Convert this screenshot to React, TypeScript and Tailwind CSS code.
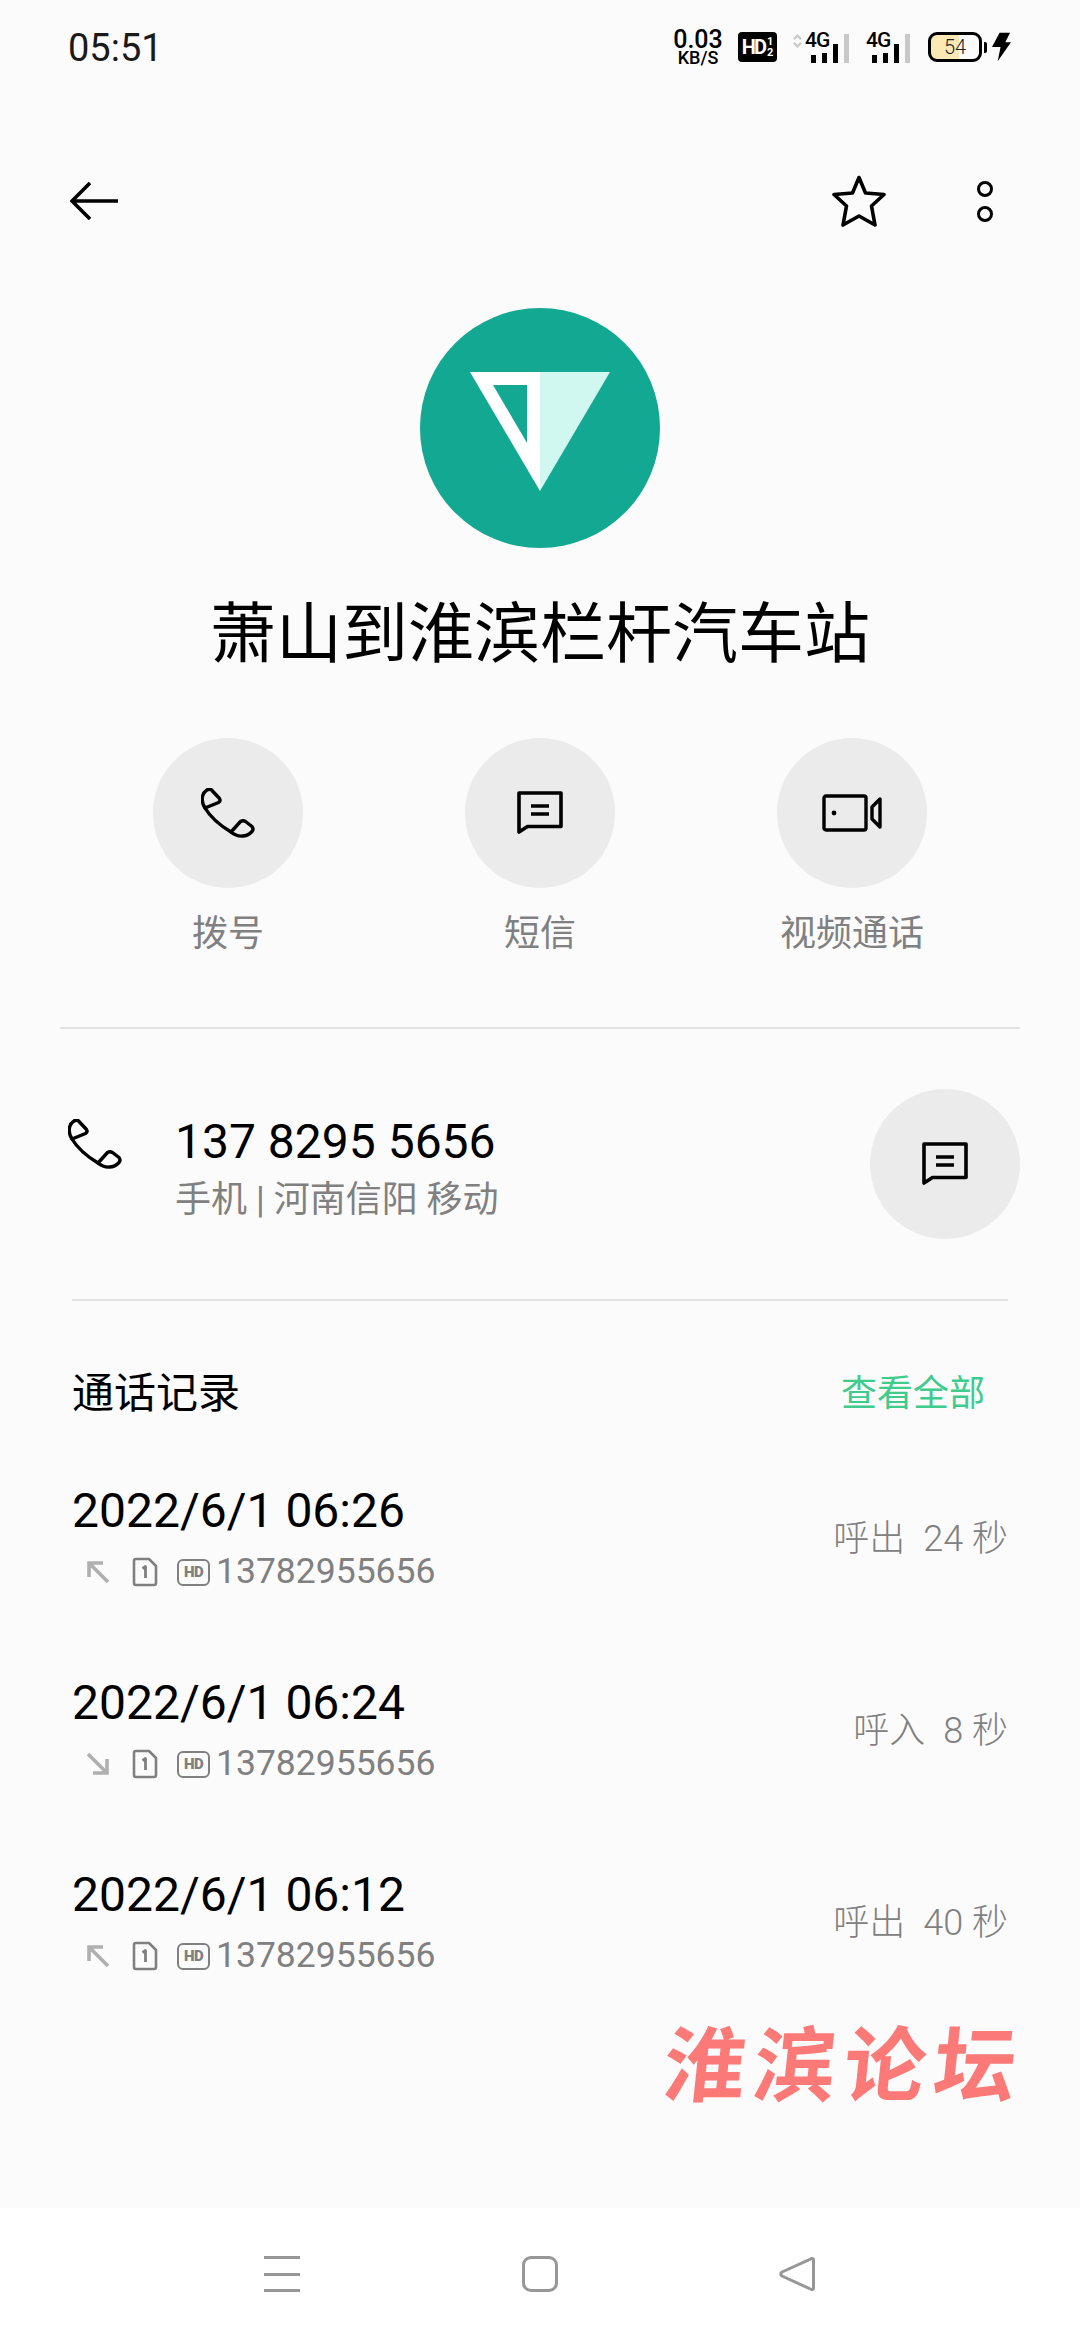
const records = [
  { time: "2022/6/1 06:26", kind: "呼出", length: "24 秒", out: true },
  { time: "2022/6/1 06:24", kind: "呼入", length: "8 秒", out: false },
  { time: "2022/6/1 06:12", kind: "呼出", length: "40 秒", out: true },
]

function PhoneIcon({ className }: { className: string }) {
  return (
    <svg viewBox="0 0 54 50" fill="none" stroke="currentColor" strokeWidth="3.4" strokeLinejoin="round" strokeLinecap="round" className={className}>
      <path d="M4 20C0 14 0 6 6 2Q9 0 11 2.500L18.500 10.500Q20 13 17.500 14.500Z" />
      <path d="M4 20C10 30 20 38 30 44" />
      <path d="M30 44L39.500 33.500Q42 32 44.500 33.500L51 38.500Q53 41.500 51 43.500C46 49 37 50 30 44Z" />
    </svg>
  )
}

function MessageIcon({ className }: { className: string }) {
  return (
    <svg viewBox="0 0 46 44" fill="none" stroke="currentColor" strokeWidth="3.6" className={className}>
      <path d="M2 2H44V35.500H10.500L2 41Z" strokeLinejoin="round" />
      <path d="M14 15H32M14 23H32" />
    </svg>
  )
}

function VideoIcon({ className }: { className: string }) {
  return (
    <svg viewBox="0 0 60 38" fill="none" stroke="currentColor" strokeWidth="3.4" strokeLinejoin="round" className={className}>
      <rect x="2" y="2" width="42" height="34" rx="2" />
      <circle cx="12" cy="19" r="2.400" fill="currentColor" stroke="none" />
      <path d="M58 5V33L50 25V13Z" />
    </svg>
  )
}

function CallArrow({ out }: { out: boolean }) {
  return (
    <svg viewBox="0 0 24 24" fill="none" stroke="#b0b0b0" strokeWidth="3.6" className="h-[24px] w-[24px]">
      {out ? <path d="M22 22L3 3M3 17V3H17" /> : <path d="M2 2L21 21M21 7V21H7" />}
    </svg>
  )
}

function SimIcon() {
  return (
    <svg viewBox="0 0 26 30" fill="none" stroke="#808080" strokeWidth="2.600" strokeLinejoin="round" className="h-[30px] w-[26px]">
      <path d="M2 4Q2 2 4 2H17L24 9V26Q24 28 22 28H4Q2 28 2 26Z" />
      <path d="M10.500 11.500L13.500 9.500V21" strokeWidth="2.800" />
    </svg>
  )
}

function RecordRow({ time, kind, length, out }: (typeof records)[number]) {
  return (
    <div className="flex items-center justify-between">
      <div>
        <div className="text-[48px] leading-[60px] text-black">{time}</div>
        <div className="mt-[6px] flex h-[50px] items-center text-[35.500px] text-[#808080]">
          <div className="ml-[14px] flex w-[46px] items-center">
            <CallArrow out={out} />
          </div>
          <SimIcon />
          <span className="ml-[19px] mr-[6px] flex h-[27px] w-[33px] items-center justify-center rounded-[6px] border-[2.5px] border-[#808080] text-[15px] font-black leading-none tracking-[-0.5px]">
            HD
          </span>
          <span>13782955656</span>
        </div>
      </div>
      <div className="text-[36px] font-light text-[#808080]">
        {kind}
        <span className="ml-[18px]">{length}</span>
      </div>
    </div>
  )
}

function SignalBars({ arrows }: { arrows?: boolean }) {
  return (
    <div className="relative h-[32px] w-[44px]">
      {arrows && (
        <svg viewBox="0 0 10 16" className="absolute left-[-12px] top-[2px] h-[16px] w-[9px]" fill="none" stroke="#c8c8c8" strokeWidth="2.400">
          <path d="M1 6L5 2L9 6M1 10L5 14L9 10" />
        </svg>
      )}
      <span className="absolute left-[0px] top-[-1px] text-[21px] font-medium leading-[20px] tracking-[-1px] text-black">4G</span>
      <div className="absolute bottom-0 left-[6px] flex items-end gap-[6px]">
        <span className="h-[8px] w-[5px] bg-black" />
        <span className="h-[10px] w-[5px] bg-black" />
        <span className="h-[19px] w-[5px] bg-black" />
        <span className="h-[29px] w-[5px] bg-[#c8c8c8]" />
      </div>
    </div>
  )
}

function StatusBar() {
  return (
    <div className="flex h-[94px] items-center justify-between pl-[68px] pr-[69px]">
      <span className="mt-[3px] text-[38px] font-normal text-[#1a1a1a]">05:51</span>
      <div className="flex items-center">
        <div className="flex w-[52px] flex-col items-center text-black">
          <span className="text-[25px] font-medium leading-[21px]">0.03</span>
          <span className="text-[18px] font-medium leading-[16px]">KB/S</span>
        </div>
        <div className="ml-[14px] flex h-[30px] w-[39px] items-center justify-center rounded-[4px] bg-black font-bold text-white">
          <span className="text-[20px] leading-none tracking-[-2px]">HD</span>
          <span className="ml-[2px] flex flex-col text-[11px] leading-[11px]">
            <span>1</span>
            <span>2</span>
          </span>
        </div>
        <div className="ml-[28px]">
          <SignalBars arrows />
        </div>
        <div className="ml-[17px]">
          <SignalBars />
        </div>
        <div className="ml-[18px] flex items-center">
          <div className="flex h-[30px] w-[54px] items-center justify-center rounded-[9px] border-[3px] border-black bg-[linear-gradient(90deg,#fae9b4_58%,#fbfbfb_58%)] text-[20px] font-light text-[#222]">
            54
          </div>
          <span className="ml-[2px] h-[11px] w-[3px] rounded-r-[2px] bg-black" />
          <svg viewBox="0 0 20 30" className="ml-[5px] h-[30px] w-[19px]" fill="#000">
            <path d="M8 0H19L14 10H20L6 30L9 15H0Z" />
          </svg>
        </div>
      </div>
    </div>
  )
}

export default function App() {
  return (
    <div className="relative flex h-[2340px] w-[1080px] flex-col overflow-hidden bg-[#fbfbfb] font-[Roboto,'Noto_Sans_CJK_SC',sans-serif]">
      <StatusBar />

      {/* Toolbar */}
      <div className="flex h-[214px] items-center pl-[70px] pr-[87px]">
        <svg viewBox="0 0 48 38" fill="none" stroke="#000" strokeWidth="3.6" className="h-[38px] w-[48px]">
          <path d="M20 1L2 19L20 37M2 19H48" />
        </svg>
        <svg viewBox="0 0 54 52" fill="none" stroke="#000" strokeWidth="3.6" strokeLinejoin="round" className="ml-auto h-[52px] w-[54px]">
          <path d="M27 2.500L33.500 18L52 19.500L39.500 31L43 50L27 41L11 50L14.500 31L2 19.500L20.500 18Z" />
        </svg>
        <div className="ml-[91px] flex flex-col gap-[9px]">
          <span className="h-[16px] w-[16px] rounded-full border-[3.5px] border-black" />
          <span className="h-[16px] w-[16px] rounded-full border-[3.5px] border-black" />
        </div>
      </div>

      {/* Avatar */}
      <div className="flex justify-center">
        <div className="flex h-[240px] w-[240px] items-center justify-center rounded-full bg-[#13a892]">
          <svg viewBox="0 0 140 119" className="mt-[6px] h-[119px] w-[140px]">
            <path d="M70 0H140L70 119Z" fill="#d0f7f0" />
            <path d="M0 0H70V119ZM23 13L57 71V13Z" fill="#fff" fillRule="evenodd" />
          </svg>
        </div>
      </div>

      <div className="mt-[42px] text-center text-[66px] font-normal leading-[90px] text-black">萧山到淮滨栏杆汽车站</div>

      {/* Actions */}
      <div className="mt-[58px] grid grid-cols-3 px-[72px]">
        <div className="flex flex-col items-center">
          <div className="flex h-[150px] w-[150px] items-center justify-center rounded-full bg-[#ebebeb]">
            <PhoneIcon className="h-[50px] w-[54px] text-black" />
          </div>
          <span className="mt-[21px] text-[36px] leading-[50px] text-[#808080]">拨号</span>
        </div>
        <div className="flex flex-col items-center">
          <div className="flex h-[150px] w-[150px] items-center justify-center rounded-full bg-[#ebebeb]">
            <MessageIcon className="h-[44px] w-[46px] text-black" />
          </div>
          <span className="mt-[21px] text-[36px] leading-[50px] text-[#808080]">短信</span>
        </div>
        <div className="flex flex-col items-center">
          <div className="flex h-[150px] w-[150px] items-center justify-center rounded-full bg-[#ebebeb]">
            <VideoIcon className="h-[38px] w-[60px] text-black" />
          </div>
          <span className="mt-[21px] text-[36px] leading-[50px] text-[#808080]">视频通话</span>
        </div>
      </div>

      <div className="mx-[60px] mt-[68px] h-[2px] bg-[#e2e2e2]" />

      {/* Number */}
      <div className="mt-[60px] flex h-[150px] pl-[68px] pr-[60px]">
        <PhoneIcon className="mt-[30px] h-[50px] w-[54px] text-black" />
        <div className="ml-[53px] mt-[23px]">
          <div className="text-[48px] leading-[60px] text-black">137 8295 5656</div>
          <div className="mt-[3px] text-[36px] leading-[50px] text-[#808080]">手机 | 河南信阳 移动</div>
        </div>
        <div className="ml-auto flex h-[150px] w-[150px] items-center justify-center rounded-full bg-[#ebebeb]">
          <MessageIcon className="h-[44px] w-[46px] text-black" />
        </div>
      </div>

      <div className="mx-[72px] mt-[60px] h-[2px] bg-[#e2e2e2]" />

      {/* Call log */}
      <div className="mt-[63px] flex items-center justify-between pl-[72px] pr-[95px] leading-[60px]">
        <span className="text-[42px] text-black">通话记录</span>
        <span className="text-[36px] text-[#3fcb8c]">查看全部</span>
      </div>
      <div className="mt-[57px] flex flex-col gap-[76px] px-[72px]">
        {records.map((record) => (
          <RecordRow key={record.time} {...record} />
        ))}
      </div>

      {/* Watermark */}
      <div className="absolute left-[664px] top-[2020px] -skew-x-6 text-[82px] font-bold leading-[94px] tracking-[8px] text-[#fb7a78]">淮滨论坛</div>

      {/* Navigation */}
      <div className="mt-auto flex h-[132px] items-start justify-between bg-white pl-[264px] pr-[265px] pt-[48px]">
        <div className="flex h-[36px] w-[36px] flex-col justify-between">
          <span className="h-[3px] bg-[#979797]" />
          <span className="h-[3px] bg-[#979797]" />
          <span className="h-[3px] bg-[#979797]" />
        </div>
        <span className="h-[36px] w-[36px] rounded-[9px] border-[3px] border-[#979797]" />
        <svg viewBox="0 0 36 36" fill="none" stroke="#979797" strokeWidth="3" strokeLinejoin="round" className="h-[36px] w-[36px]">
          <path d="M33 2.500Q34.500 2.500 34.500 4V32Q34.500 34 32.500 33.500L3 20Q0.500 18 3 16L32 2.800Z" />
        </svg>
      </div>
    </div>
  )
}
